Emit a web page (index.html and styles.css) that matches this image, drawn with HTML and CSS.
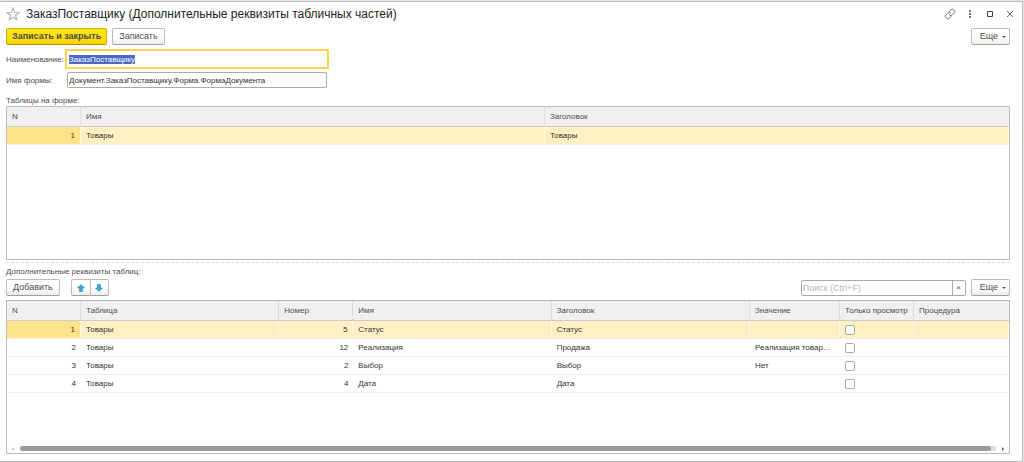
FILE: index.html
```
<!DOCTYPE html>
<html lang="ru">
<head>
  <meta charset="UTF-8">
  <meta name="viewport" content="width=device-width, initial-scale=1.0">
  <title>ЗаказПоставщику</title>
  <link rel="stylesheet" href="styles.css">
</head>
<body>
  <main class="window">
    <header class="title-bar">
      <button class="icon-button" aria-label="В избранное">
        <svg width="14" height="14" viewBox="0 0 12 12" fill="none" stroke="#b5b5b5"><path d="M6 1l1.4 3.5 3.8.2-3 2.4 1 3.7L6 8.7l-3.2 2.1 1-3.7-3-2.4 3.8-.2z"/></svg>
      </button>
      <h1>ЗаказПоставщику (Дополнительные реквизиты табличных частей)</h1>
      <div class="window-buttons">
        <button class="icon-button" aria-label="Ссылка">
          <svg width="12" height="12" viewBox="0 0 12 12" fill="none" stroke="#777" stroke-linecap="round"><path d="M5 3.6l1.8-1.8a2 2 0 0 1 2.9 0l.4.4a2 2 0 0 1 0 2.9L8.2 7a2 2 0 0 1-2.9 0M7 8.4l-1.8 1.8a2 2 0 0 1-2.9 0l-.4-.4a2 2 0 0 1 0-2.900L3.800 5a2 2 0 0 1 2.900 0"/></svg>
        </button>
        <button class="icon-button" aria-label="Меню">
          <svg width="12" height="12" viewBox="0 0 12 12" fill="#777"><path d="M5 2h2v2H5zM5 5h2v2H5zM5 8h2v2H5z"/></svg>
        </button>
        <button class="icon-button" aria-label="Развернуть">
          <svg width="12" height="12" viewBox="0 0 12 12" fill="none" stroke="#444"><path d="M3.500 3.500h5v5h-5z"/></svg>
        </button>
        <button class="icon-button" aria-label="Закрыть">
          <svg width="12" height="12" viewBox="0 0 12 12" fill="none" stroke="#666"><path d="M3 3l6 6M9 3l-6 6"/></svg>
        </button>
      </div>
    </header>

    <div class="toolbar">
      <button class="button primary">Записать и закрыть</button>
      <button class="button">Записать</button>
      <button class="button more">Еще <span class="arrow"></span></button>
    </div>

    <div class="fields">
      <label for="name">Наименование:</label>
      <input class="text-input" id="name" type="text" value="ЗаказПоставщику">
      <label for="form-name">Имя формы:</label>
      <input class="text-input" id="form-name" type="text" value="Документ.ЗаказПоставщику.Форма.ФормаДокумента">
    </div>

    <h2>Таблицы на форме:</h2>
    <div class="grid">
      <table>
        <colgroup><col class="col-n"><col><col></colgroup>
        <thead>
          <tr><th>N</th><th>Имя</th><th>Заголовок</th></tr>
        </thead>
        <tbody>
          <tr class="selected"><td class="num">1</td><td>Товары</td><td>Товары</td></tr>
        </tbody>
      </table>
    </div>

    <div class="splitter"></div>

    <h2>Дополнительные реквизиты таблиц:</h2>
    <div class="toolbar">
      <button class="button">Добавить</button>
      <div class="button-group">
        <button class="button" aria-label="Вверх">
          <svg width="8" height="8" viewBox="0 0 8 8" fill="#3fa9e0" stroke="#2382b8" stroke-width=".6"><path d="M4 .5L7.500 4H5.500v3.500h-3V4H.5z"/></svg>
        </button>
        <button class="button" aria-label="Вниз">
          <svg width="8" height="8" viewBox="0 0 8 8" fill="#3fa9e0" stroke="#2382b8" stroke-width=".6"><path d="M4 7.500L.5 4h2V.5h3V4h2z"/></svg>
        </button>
      </div>
      <div class="search">
        <input type="text" placeholder="Поиск (Ctrl+F)" aria-label="Поиск">
        <button aria-label="Очистить">×</button>
      </div>
      <button class="button more">Еще <span class="arrow"></span></button>
    </div>

    <div class="grid attributes">
      <table>
        <colgroup>
          <col class="col-n"><col><col class="col-number"><col><col><col class="col-value"><col class="col-readonly"><col class="col-proc">
        </colgroup>
        <thead>
          <tr><th>N</th><th>Таблица</th><th>Номер</th><th>Имя</th><th>Заголовок</th><th>Значение</th><th>Только просмотр</th><th>Процедура</th></tr>
        </thead>
        <tbody>
          <tr class="selected">
            <td class="num">1</td><td>Товары</td><td class="num">5</td><td>Статус</td><td>Статус</td><td></td>
            <td><input type="checkbox" aria-label="Только просмотр, строка 1"></td><td></td>
          </tr>
          <tr>
            <td class="num">2</td><td>Товары</td><td class="num">12</td><td>Реализация</td><td>Продажа</td><td>Реализация товар…</td>
            <td><input type="checkbox" aria-label="Только просмотр, строка 2"></td><td></td>
          </tr>
          <tr>
            <td class="num">3</td><td>Товары</td><td class="num">2</td><td>Выбор</td><td>Выбор</td><td>Нет</td>
            <td><input type="checkbox" aria-label="Только просмотр, строка 3"></td><td></td>
          </tr>
          <tr>
            <td class="num">4</td><td>Товары</td><td class="num">4</td><td>Дата</td><td>Дата</td><td></td>
            <td><input type="checkbox" aria-label="Только просмотр, строка 4"></td><td></td>
          </tr>
        </tbody>
      </table>
      <div class="scrollbar">
        <span class="scroll-left"></span>
        <div class="track"><div class="thumb"></div></div>
        <span class="scroll-right"></span>
      </div>
    </div>
  </main>

  <script>
    const nameInput = document.getElementById('name');
    nameInput.focus();
    nameInput.select();
  </script>
</body>
</html>
```
FILE: styles.css
```
* {
  box-sizing: border-box;
}

body {
  margin: 0;
  padding: 1px 1px 0 0;
  background: #e4e4e4;
  color: #4d4d4d;
  font-family: "Liberation Sans", Arial, sans-serif;
  font-size: 8px;
}

button,
input {
  font: inherit;
  color: inherit;
}

.window {
  display: flex;
  flex-direction: column;
  min-height: calc(100vh - 1px);
  padding: 0 12px 7px 6px;
  background: white;
  border: 1px solid #bbb;
  border-left: none;
}

.title-bar {
  display: flex;
  align-items: center;
  height: 24px;
}

.title-bar h1 {
  margin: 0 0 0 6px;
  color: #222;
  font-size: 12px;
  font-weight: normal;
}

.window-buttons {
  display: flex;
  gap: 8px;
  margin-left: auto;
  margin-right: -6px;
}

.icon-button {
  display: flex;
  padding: 0;
  background: none;
  border: none;
}

.toolbar {
  display: flex;
  align-items: center;
  gap: 5px;
  margin-top: 2px;
}

.button {
  height: 17px;
  padding: 0 6px;
  background: linear-gradient(to bottom, white 50%, #ececec);
  border: 1px solid #bbb;
  border-bottom-color: #a0a0a0;
  border-radius: 2px;
  font-size: 9px;
  line-height: 15px;
}

.primary {
  padding: 0 5px;
  background: linear-gradient(to bottom, #ffe81c, #f7d400);
  border-color: #d0b000;
  border-bottom-color: #a89000;
  font-weight: bold;
}

.more {
  display: flex;
  align-items: center;
  gap: 4px;
  margin-left: auto;
  padding: 0 3px 0 8px;
}

.arrow {
  border: 2px solid transparent;
  border-top-color: #555;
  border-bottom: none;
}

.fields {
  display: grid;
  grid-template-columns: 61px 260px;
  row-gap: 5px;
  align-items: center;
  margin-top: 6px;
}

.text-input {
  height: 16px;
  padding: 0 1px;
  background: white;
  border: 1px solid #aaa;
  border-radius: 2px;
  color: #333;
}

.text-input:focus {
  border-color: white;
  border-radius: 0;
  outline: 2px solid #ffd34d;
}

.text-input::selection {
  background: #4b68c4;
  color: white;
}

h2 {
  margin: 7px 0 0;
  font-size: 8px;
  font-weight: normal;
  line-height: 11px;
}

.grid {
  display: flex;
  flex: 1 1 0;
  flex-direction: column;
  border: 1px solid #bbb;
}

table {
  width: 100%;
  border-collapse: separate;
  border-spacing: 0;
  table-layout: fixed;
}

.col-n,
.col-number,
.col-readonly {
  width: 74px;
}

.col-value {
  width: 90px;
}

.col-proc {
  width: 95px;
}

th,
td {
  padding: 0 5px;
  font-weight: normal;
  text-align: left;
  white-space: nowrap;
}

th {
  height: 20px;
  background: #f0f0f0;
  border-right: 1px solid #ddd;
  border-bottom: 1px solid #ccc;
}

td {
  height: 18px;
  border-bottom: 1px solid #eee;
  color: #333;
}

th:last-child {
  border-right: none;
}

.num {
  text-align: right;
}

.selected td {
  background: #fff0c4;
  border-right: 1px solid #fff8e2;
}

.selected td:first-child {
  background: #ffe38a;
}

td input {
  display: block;
  appearance: none;
  width: 10px;
  height: 10px;
  margin: 0;
  background: white;
  border: 1px solid #aaa;
  border-radius: 2px;
}

.splitter {
  margin-top: 2px;
  border-top: 1px dashed #ddd;
}

.splitter + h2 {
  margin-top: 3px;
}

.button-group {
  display: flex;
  margin-left: 6px;
}

.button-group .button {
  display: flex;
  align-items: center;
  justify-content: center;
  width: 19px;
  padding: 0;
}

.button-group .button:first-child {
  border-right: none;
  border-radius: 2px 0 0 2px;
}

.button-group .button:last-child {
  border-radius: 0 2px 2px 0;
}

.search {
  display: flex;
  width: 165px;
  height: 16px;
  margin-left: auto;
  border: 1px solid #aaa;
  border-radius: 2px;
}

.search input {
  flex: 1;
  min-width: 0;
  padding: 0 1px;
  background: none;
  border: none;
  font-size: 9px;
}

.search input::placeholder {
  color: #b8b8b8;
}

.search button {
  width: 13px;
  padding: 0;
  background: none;
  border: none;
  border-left: 1px solid #aaa;
  line-height: 12px;
}

.search + .more {
  margin-left: 0;
}

.attributes {
  margin-top: 4px;
}

.scrollbar {
  display: flex;
  align-items: center;
  gap: 6px;
  height: 9px;
  margin-top: auto;
  padding: 0 5px;
}

.scroll-left,
.scroll-right {
  border: 2px solid transparent;
}

.scroll-left {
  border-right-color: #bbb;
  border-left: none;
}

.scroll-right {
  border-left-color: #555;
  border-right: none;
}

.track {
  flex: 1;
  background: #ddd;
  border-radius: 3px;
}

.thumb {
  height: 5px;
  margin-right: 5px;
  background: #999;
  border-radius: 3px;
}
```
